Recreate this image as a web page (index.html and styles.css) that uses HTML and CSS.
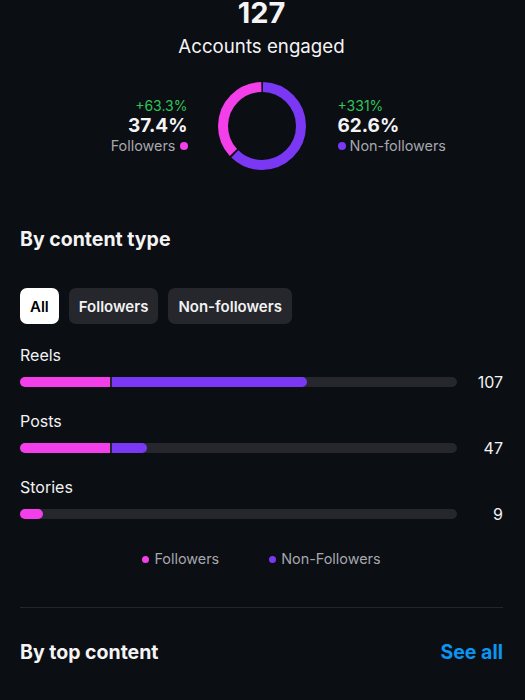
FILE: index.html
```html
<!DOCTYPE html>
<html lang="en">
<head>
<meta charset="utf-8">
<title>Accounts engaged</title>
<link rel="stylesheet" href="styles.css">
</head>
<body>
<main class="page">
  <section class="hero">
    <div class="total">127</div>
    <div class="subtitle">Accounts engaged</div>
    <div class="split">
      <div class="stat stat-left">
        <div class="change">+63.3%</div>
        <div class="value">37.4%</div>
        <div class="label">Followers <span class="dot dot-pink"></span></div>
      </div>
      <svg class="donut" width="88" height="88" viewBox="0 0 88 88">
        <g transform="rotate(-90 44 44)">
          <circle cx="44" cy="44" r="39" fill="none" stroke="#7a38f4" stroke-width="10" stroke-dasharray="151.4 245.04" stroke-dashoffset="-1"/>
          <circle cx="44" cy="44" r="39" fill="none" stroke="#f23fe9" stroke-width="10" stroke-dasharray="89.6 245.04" stroke-dashoffset="-154.4"/>
        </g>
      </svg>
      <div class="stat stat-right">
        <div class="change">+331%</div>
        <div class="value">62.6%</div>
        <div class="label"><span class="dot dot-purple"></span> Non-followers</div>
      </div>
    </div>
  </section>

  <h2 class="heading heading-first">By content type</h2>

  <div class="chips">
    <span class="chip chip-active">All</span>
    <span class="chip">Followers</span>
    <span class="chip">Non-followers</span>
  </div>

  <div class="metrics">
    <div class="metric">
      <div class="metric-label">Reels</div>
      <div class="metric-row">
        <div class="track">
          <span class="seg seg-pink" style="width:20.6%"></span>
          <span class="seg seg-purple seg-end" style="width:44.6%"></span>
        </div>
        <span class="metric-num">107</span>
      </div>
    </div>
    <div class="metric">
      <div class="metric-label">Posts</div>
      <div class="metric-row">
        <div class="track">
          <span class="seg seg-pink" style="width:20.6%"></span>
          <span class="seg seg-purple seg-end" style="width:8%"></span>
        </div>
        <span class="metric-num">47</span>
      </div>
    </div>
    <div class="metric">
      <div class="metric-label">Stories</div>
      <div class="metric-row">
        <div class="track">
          <span class="seg seg-pink seg-end" style="width:5.3%"></span>
        </div>
        <span class="metric-num">9</span>
      </div>
    </div>
  </div>

  <div class="legend">
    <span class="legend-item"><span class="dot dot-pink"></span>Followers</span>
    <span class="legend-item"><span class="dot dot-purple"></span>Non-Followers</span>
  </div>

  <hr class="divider">

  <div class="section-head">
    <h2 class="heading">By top content</h2>
    <a class="see-all" href="#">See all</a>
  </div>
</main>
</body>
</html>
```

FILE: styles.css
```css
* { box-sizing: border-box; }

html, body {
  margin: 0;
  background: #0b0e13;
}

body {
  font-family: Inter, "Noto Sans", "Liberation Sans", sans-serif;
  color: #f4f4f5;
  overflow: hidden;
}

.page {
  padding: 0 22px 0 20px;
}

.hero {
  text-align: center;
}

.total {
  font-size: 29px;
  line-height: 34px;
  font-weight: 700;
  margin-top: -4px;
}

.subtitle {
  font-size: 18.7px;
  line-height: 22px;
  margin-top: 6px;
}

.split {
  display: grid;
  grid-template-columns: 1fr auto 1fr;
  align-items: center;
  margin-top: 24px;
}

.donut {
  display: block;
}

.stat-left {
  text-align: right;
  padding-right: 30px;
}

.stat-right {
  text-align: left;
  padding-left: 32px;
}

.change {
  font-size: 14px;
  line-height: 17px;
  color: #30c45a;
}

.value {
  font-size: 19px;
  line-height: 23px;
  font-weight: 700;
}

.label {
  font-size: 14.4px;
  line-height: 18px;
  color: #a6a7ad;
}

.dot {
  display: inline-block;
  width: 8px;
  height: 8px;
  border-radius: 50%;
  vertical-align: 1px;
}

.dot-pink { background: #f23fe9; }
.dot-purple { background: #7a38f4; }

.heading {
  font-size: 19.5px;
  line-height: 24px;
  font-weight: 700;
  margin: 0;
}

.heading-first {
  margin-top: 57px;
}

.chips {
  display: flex;
  gap: 10px;
  margin-top: 37px;
}

.chip {
  height: 36px;
  display: inline-flex;
  align-items: center;
  padding: 0 10px;
  border-radius: 7px;
  background: #25272c;
  color: #f2f2f3;
  font-size: 15px;
  font-weight: 600;
}

.chip-active {
  background: #ffffff;
  color: #000000;
}

.metrics {
  margin-top: 21px;
  display: flex;
  flex-direction: column;
  gap: 19px;
}

.metric-label {
  font-size: 16px;
  line-height: 20px;
  color: #f2f2f3;
}

.metric-row {
  display: flex;
  align-items: center;
  margin-top: 7px;
  height: 20px;
}

.track {
  flex: 1;
  height: 10px;
  border-radius: 5px;
  background: #25272c;
  display: flex;
  gap: 2px;
}

.seg {
  height: 10px;
}

.seg-pink {
  background: #f23fe9;
  border-radius: 5px 0 0 5px;
}

.seg-purple {
  background: #7a38f4;
}

.seg-end {
  border-top-right-radius: 5px;
  border-bottom-right-radius: 5px;
}

.metric-num {
  width: 46px;
  text-align: right;
  font-size: 16px;
  line-height: 20px;
  color: #f2f2f3;
}

.legend {
  display: flex;
  justify-content: center;
  gap: 50px;
  margin-top: 26px;
  font-size: 14.4px;
  line-height: 18px;
  color: #a6a7ad;
}

.legend-item {
  display: inline-flex;
  align-items: center;
  gap: 5px;
}

.legend-item .dot {
  width: 7px;
  height: 7px;
  vertical-align: 0;
}

.divider {
  border: 0;
  height: 1px;
  background: #23262b;
  margin: 39px 0 0 0;
}

.section-head {
  display: flex;
  justify-content: space-between;
  align-items: center;
  margin-top: 32px;
}

.see-all {
  font-size: 19.5px;
  line-height: 24px;
  font-weight: 700;
  color: #0a95f2;
  text-decoration: none;
}
```
